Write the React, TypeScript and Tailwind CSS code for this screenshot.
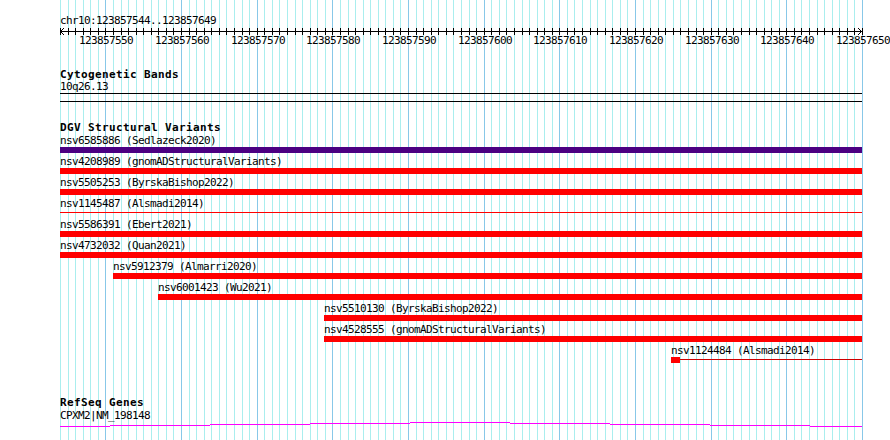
import React from "react";

const START = 123857544;
const SPAN = 106;
const LEFT = 60;
const TRACK_W = 802;

const bpX = (i: number) => Math.round(LEFT + (i * TRACK_W) / SPAN);

const ticks = Array.from({ length: SPAN + 1 }, (_, i) => ({
  pos: START + i,
  x: bpX(i),
  major: (START + i) % 10 === 0,
}));

const mono = "font-['DejaVu_Sans_Mono',monospace] text-[11px] tracking-[-0.62px] leading-[12px] text-black whitespace-pre";
const title = "font-['DejaVu_Sans_Mono',monospace] font-bold text-[11px] tracking-[0.38px] leading-[12px] text-black whitespace-pre";

type Variant = {
  id: string;
  source: string;
  start: number; // px offset inside track
  color: string;
  kind: "bar" | "line" | "point";
};

const variants: Variant[] = [
  { id: "nsv6585886", source: "Sedlazeck2020", start: 0, color: "#4b0082", kind: "bar" },
  { id: "nsv4208989", source: "gnomADStructuralVariants", start: 0, color: "#ff0000", kind: "bar" },
  { id: "nsv5505253", source: "ByrskaBishop2022", start: 0, color: "#ff0000", kind: "bar" },
  { id: "nsv1145487", source: "Alsmadi2014", start: 0, color: "#ff0000", kind: "line" },
  { id: "nsv5586391", source: "Ebert2021", start: 0, color: "#ff0000", kind: "bar" },
  { id: "nsv4732032", source: "Quan2021", start: 0, color: "#ff0000", kind: "bar" },
  { id: "nsv5912379", source: "Almarri2020", start: 53, color: "#ff0000", kind: "bar" },
  { id: "nsv6001423", source: "Wu2021", start: 98, color: "#ff0000", kind: "bar" },
  { id: "nsv5510130", source: "ByrskaBishop2022", start: 264, color: "#ff0000", kind: "bar" },
  { id: "nsv4528555", source: "gnomADStructuralVariants", start: 264, color: "#ff0000", kind: "bar" },
  { id: "nsv1124484", source: "Alsmadi2014", start: 611, color: "#ff0000", kind: "point" },
];

const Grid = () => (
  <svg className="absolute inset-0" width={890} height={440}>
    {ticks.map((t) => (
      <line
        key={t.pos}
        x1={t.x + 0.5}
        x2={t.x + 0.5}
        y1={0}
        y2={440}
        stroke={t.major ? "#88c8e8" : "#aaeeee"}
      />
    ))}
  </svg>
);

const Ruler = () => (
  <svg width={890} height={20} className="block">
    <line x1={LEFT} x2={LEFT + TRACK_W} y1={4.5} y2={4.5} stroke="#000" />
    {ticks.map((t) => (
      <line key={t.pos} x1={t.x + 0.5} x2={t.x + 0.5} y1={1} y2={8} stroke="#000" />
    ))}
    <polyline points="64,1 60.5,4.5 64,8" fill="none" stroke="#000" />
    <polyline points="858,1 861.5,4.5 858,8" fill="none" stroke="#000" />
    {ticks
      .filter((t) => t.major)
      .map((t) => (
        <text
          key={t.pos}
          x={t.x + 1}
          y={17}
          textAnchor="middle"
          fontFamily="DejaVu Sans Mono, monospace"
          fontSize={11}
          letterSpacing={-0.62}
          fill="#000"
        >
          {t.pos}
        </text>
      ))}
  </svg>
);

const VariantRow = ({ v }: { v: Variant }) => (
  <div className="mb-[3px]">
    <div className={mono} style={{ marginLeft: v.start }}>
      {v.id} ({v.source})
    </div>
    {v.kind === "bar" && (
      <div className="h-[6px]" style={{ marginLeft: v.start, width: TRACK_W - v.start, background: v.color }} />
    )}
    {v.kind === "line" && (
      <div className="h-[6px] pt-[2px]">
        <div className="h-px" style={{ marginLeft: v.start, width: TRACK_W - v.start, background: v.color }} />
      </div>
    )}
    {v.kind === "point" && (
      <div className="flex h-[6px] items-start" style={{ marginLeft: v.start }}>
        <div className="h-[6px] w-[9px]" style={{ background: v.color }} />
        <div className="mt-[2px] h-px flex-1 bg-[#cc0000]" />
      </div>
    )}
  </div>
);

export default function App() {
  return (
    <div className="relative h-[440px] w-[890px] overflow-hidden bg-white">
      <Grid />
      <div className="relative">
        <div className={`${mono} pl-[60px] pt-[15px]`}>chr10:123857544..123857649</div>
        <Ruler />

        <div className="mt-[22px] w-[862px] pl-[60px]">
          <div className={title}>Cytogenetic Bands</div>
          <div className={mono}>10q26.13</div>
          <div className="h-[9px] border-y border-black" />
        </div>

        <div className="mt-[20px] w-[862px] pl-[60px]">
          <div className={`${title} mb-px`}>DGV Structural Variants</div>
          {variants.map((v) => (
            <VariantRow key={v.id} v={v} />
          ))}
        </div>

        <div className="mt-[34px] w-[862px] pl-[60px]">
          <div className={title}>RefSeq Genes</div>
          <div className={`${mono} mt-px`}>CPXM2|NM_198148</div>
          <svg width={TRACK_W} height={6} className="block">
            <path
              d="M0 4.5H50M50 3.5H150M150 2.5H250M250 1.5H350M350 0.5H450M450 1.5H550M550 2.5H650M650 3.5H750M750 4.5H802"
              stroke="#ff00ff"
              fill="none"
            />
          </svg>
        </div>
      </div>
    </div>
  );
}
